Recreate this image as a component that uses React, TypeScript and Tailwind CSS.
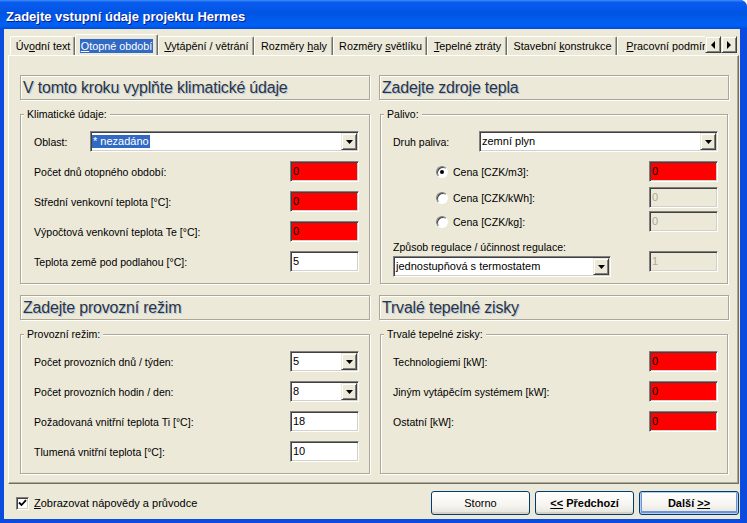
import React from "react";

const sunken =
  "border border-t-[#808080] border-l-[#808080] border-r-white border-b-white shadow-[inset_1px_1px_0_#404040,inset_-1px_-1px_0_#d4d0c8]";
const raised =
  "border border-t-[#ece9d8] border-l-[#ece9d8] border-r-[#404040] border-b-[#404040] shadow-[inset_1px_1px_0_#fff,inset_-1px_-1px_0_#808080]";
const etched = "border border-[#aca899] shadow-[inset_1px_1px_0_#fff,1px_1px_0_#fff]";
const label = "text-[10.55px] leading-[14px] whitespace-nowrap";

const tabs = [
  { t: "Úvodní text", u: 2, w: "w-[65px]" },
  { t: "Otopné období", u: 0, w: "w-[83px]", sel: true },
  { t: "Vytápění / větrání", u: 0, w: "w-[96px]" },
  { t: "Rozměry haly", u: 8, w: "w-[79px]" },
  { t: "Rozměry světlíku", u: 8, w: "w-[94px]" },
  { t: "Tepelné ztráty", u: 0, w: "w-[80px]" },
  { t: "Stavební konstrukce", u: 9, w: "w-[110px]" },
  { t: "Pracovní podmínky", u: 0, w: "w-[110px]" },
];

const U = ({ t, i }: { t: string; i: number }) => (
  <>
    {t.slice(0, i)}
    <span className="underline">{t[i]}</span>
    {t.slice(i + 1)}
  </>
);

const Field = ({ value, tone = "white" }: { value: string; tone?: "red" | "white" | "off" }) => {
  const bg =
    tone === "red"
      ? "bg-[#ff0000] text-black"
      : tone === "off"
      ? "bg-[#ece9d8] text-[#aca899]"
      : "bg-white text-black";
  return (
    <div className={`w-[69px] h-[21px] shrink-0 flex items-center pl-[2px] text-[11px] ${sunken} ${bg}`}>
      {value}
    </div>
  );
};

const DropBtn = () => (
  <div className={`w-[16px] h-[17px] shrink-0 bg-[#ece9d8] flex items-center justify-center ${raised}`}>
    <svg width="7" height="4" viewBox="0 0 7 4">
      <path d="M0 0h7L3.5 4z" fill="#000" />
    </svg>
  </div>
);

const Combo = ({ value, w, selected }: { value: string; w: string; selected?: boolean }) => (
  <div className={`${w} h-[21px] shrink-0 flex items-center bg-white pl-[1px] pr-[1px] text-[11px] ${sunken}`}>
    <span className={`flex-1 whitespace-nowrap ${selected ? "" : "pl-[1px]"}`}>
      {selected ? (
        <span className="bg-[#316ac5] text-white px-[1px] leading-[13px] inline-block">{value}</span>
      ) : (
        value
      )}
    </span>
    <DropBtn />
  </div>
);

const Row = ({ text, children }: { text: string; children: React.ReactNode }) => (
  <div className="h-[21px] flex items-center justify-between">
    <span className={label}>{text}</span>
    {children}
  </div>
);

const Radio = ({ checked }: { checked?: boolean }) => (
  <div className="w-[12px] h-[12px] rounded-full border border-t-[#808080] border-l-[#808080] border-r-white border-b-white bg-white shadow-[inset_1px_1px_0_#404040] flex items-center justify-center">
    {checked && <div className="w-[4px] h-[4px] rounded-full bg-black" />}
  </div>
);

const RadioRow = ({ text, checked, tone, mt }: { text: string; checked?: boolean; tone: "red" | "off"; mt: string }) => (
  <div className={`${mt} h-[21px] flex items-center`}>
    <div className="ml-[43px]">
      <Radio checked={checked} />
    </div>
    <span className={`${label} ml-[5px]`}>{text}</span>
    <div className="ml-auto">
      <Field value="0" tone={tone} />
    </div>
  </div>
);

const Header = ({ text }: { text: string }) => (
  <div className={`h-[25px] flex items-center pl-[2px] ${etched}`}>
    <span className="text-[16px] leading-[20px] tracking-[-0.2px] text-[#333] [text-shadow:1px_1px_0_#a9c8f2] whitespace-nowrap">
      {text}
    </span>
  </div>
);

const Group = ({ title, h, children }: { title: string; h: string; children: React.ReactNode }) => (
  <div className={`${h} ${etched}`}>
    <div className={`-mt-[8px] ml-[3px] px-[3px] w-fit bg-[#ece9d8] ${label}`}>{title}</div>
    {children}
  </div>
);

const XpButton = ({ children, def }: { children: React.ReactNode; def?: boolean }) => (
  <button
    className={`h-[24px] rounded-[3px] border border-[#003c74] bg-[linear-gradient(to_bottom,#ffffff_0%,#f5f4ef_60%,#e4e3db_100%)] text-[11px] text-black ${
      def ? "w-[100px] shadow-[inset_0_0_0_1px_#b2cdf3,inset_0_-1px_0_2px_#6f93d8]" : "w-[99px] shadow-[inset_0_-2px_0_#d6d0c5]"
    }`}
  >
    {children}
  </button>
);

export default function App() {
  return (
    <div className="w-[747px] h-[523px] bg-white font-['Liberation_Sans',Arial,sans-serif] text-black">
      <div className="h-full flex flex-col rounded-tr-[7px] bg-[#0b4cdf]">
        {/* title bar */}
        <div className="h-[29px] shrink-0 flex items-center pl-[6px] pt-[3px] rounded-tr-[7px] bg-[linear-gradient(to_bottom,#3d8ef8_0%,#0a5cef_8%,#0054e3_45%,#0060f4_85%,#0059ea_94%,#0046d4_100%)]">
          <span className="text-[13px] leading-[15px] font-bold text-white [text-shadow:1px_1px_0_#0a1a8c]">
            Zadejte vstupní údaje projektu Hermes
          </span>
        </div>

        {/* body */}
        <div className="h-[490px] ml-[4px] mr-[7px] bg-[#ece9d8] flex flex-col pt-[5px]">
          {/* tabs */}
          <div className="h-[21px] flex items-end pl-[6px] pr-[3px]">
            <div className="w-[695px] h-full flex items-end overflow-hidden">
              {tabs.map((tab) => (
                <div
                  key={tab.t}
                  className={`${tab.w} shrink-0 flex items-center justify-center bg-[#ece9d8] border-t border-l border-white border-r border-r-[#716f64] shadow-[inset_-1px_0_0_#aca899] rounded-t-[2px] text-[10.8px] whitespace-nowrap ${
                    tab.sel ? "h-[22px] -mb-[1px] relative z-10" : "h-[19px]"
                  }`}
                >
                  {tab.sel ? (
                    <span className="bg-[#316ac5] text-white px-[1px] leading-[14px]">
                      <U t={tab.t} i={tab.u} />
                    </span>
                  ) : (
                    <span className="pl-[1px]">
                      <U t={tab.t} i={tab.u} />
                    </span>
                  )}
                </div>
              ))}
            </div>
            <div className="flex mb-[2px]">
              {["M4 0v8L0 4z", "M0 0v8l4-4z"].map((d) => (
                <div key={d} className={`w-[16px] h-[17px] bg-[#ece9d8] flex items-center justify-center ${raised}`}>
                  <svg width="4" height="8" viewBox="0 0 4 8">
                    <path d={d} fill="#000" />
                  </svg>
                </div>
              ))}
            </div>
          </div>

          {/* panel */}
          <div className="h-[429px] ml-[4px] mr-[1px] border border-t-white border-l-white border-r-[#716f64] border-b-[#716f64] shadow-[inset_-1px_-1px_0_#aca899] pl-[11px] pt-[19px]">
            <div className="grid grid-cols-[350px_350px] gap-x-[9px]">
              {/* left column */}
              <div className="flex flex-col">
                <Header text="V tomto kroku vyplňte klimatické údaje" />
                <div className="mt-[14px]">
                  <Group title="Klimatické údaje:" h="h-[170px]">
                    <div className="mt-[10px] pl-[13px] pr-[10px] flex flex-col gap-[9px]">
                      <Row text="Oblast:">
                        <Combo value="* nezadáno" w="w-[269px]" selected />
                      </Row>
                      <Row text="Počet dnů otopného období:">
                        <Field value="0" tone="red" />
                      </Row>
                      <Row text="Střední venkovní teplota [°C]:">
                        <Field value="0" tone="red" />
                      </Row>
                      <Row text="Výpočtová venkovní teplota Te [°C]:">
                        <Field value="0" tone="red" />
                      </Row>
                      <Row text="Teplota země pod podlahou [°C]:">
                        <Field value="5" />
                      </Row>
                    </div>
                  </Group>
                </div>
                <div className="mt-[11px]">
                  <Header text="Zadejte provozní režim" />
                </div>
                <div className="mt-[14px]">
                  <Group title="Provozní režim:" h="h-[140px]">
                    <div className="mt-[10px] pl-[13px] pr-[10px] flex flex-col gap-[9px]">
                      <Row text="Počet provozních dnů / týden:">
                        <Combo value="5" w="w-[69px]" />
                      </Row>
                      <Row text="Počet provozních hodin / den:">
                        <Combo value="8" w="w-[69px]" />
                      </Row>
                      <Row text="Požadovaná vnitřní teplota Ti [°C]:">
                        <Field value="18" />
                      </Row>
                      <Row text="Tlumená vnitřní teplota [°C]:">
                        <Field value="10" />
                      </Row>
                    </div>
                  </Group>
                </div>
              </div>

              {/* right column */}
              <div className="flex flex-col">
                <Header text="Zadejte zdroje tepla" />
                <div className="mt-[14px] mx-[1px]">
                  <Group title="Palivo:" h="h-[170px]">
                    <div className="mt-[10px] pl-[12px] pr-[9px] flex flex-col">
                      <Row text="Druh paliva:">
                        <Combo value="zemní plyn" w="w-[239px]" />
                      </Row>
                      <RadioRow mt="mt-[9px]" text="Cena [CZK/m3]:" checked tone="red" />
                      <RadioRow mt="mt-[5px]" text="Cena [CZK/kWh]:" tone="off" />
                      <RadioRow mt="mt-[3px]" text="Cena [CZK/kg]:" tone="off" />
                      <div className="mt-[8px] flex items-start">
                        <div className="flex flex-col">
                          <span className={label}>Způsob regulace / účinnost regulace:</span>
                          <div className="mt-[2px]">
                            <Combo value="jednostupňová s termostatem" w="w-[218px]" />
                          </div>
                        </div>
                        <div className="ml-auto mt-[11px]">
                          <Field value="1" tone="off" />
                        </div>
                      </div>
                    </div>
                  </Group>
                </div>
                <div className="mt-[11px]">
                  <Header text="Trvalé tepelné zisky" />
                </div>
                <div className="mt-[14px] mx-[1px]">
                  <Group title="Trvalé tepelné zisky:" h="h-[140px]">
                    <div className="mt-[10px] pl-[12px] pr-[9px] flex flex-col gap-[9px]">
                      <Row text="Technologiemi [kW]:">
                        <Field value="0" tone="red" />
                      </Row>
                      <Row text="Jiným vytápěcím systémem [kW]:">
                        <Field value="0" tone="red" />
                      </Row>
                      <Row text="Ostatní [kW]:">
                        <Field value="0" tone="red" />
                      </Row>
                    </div>
                  </Group>
                </div>
              </div>
            </div>
          </div>

          {/* bottom bar */}
          <div className="mt-[7px] h-[24px] flex items-center pl-[12px] pr-[1px]">
            <div className="w-[13px] h-[13px] bg-white border border-t-[#808080] border-l-[#808080] border-r-white border-b-white shadow-[inset_1px_1px_0_#404040,inset_-1px_-1px_0_#d4d0c8] flex items-center justify-center">
              <svg width="9" height="8" viewBox="0 0 9 8">
                <path d="M1 3.5l2.5 2.5L8 1.2" stroke="#000" strokeWidth="1.8" fill="none" />
              </svg>
            </div>
            <span className="ml-[5px] text-[11px] leading-[14px]">
              <U t="Zobrazovat nápovědy a průvodce" i={0} />
            </span>
            <div className="ml-auto flex gap-[5px]">
              <XpButton>Storno</XpButton>
              <XpButton>
                <span className="font-bold">
                  <span className="underline">&lt;&lt;</span> Předchozí
                </span>
              </XpButton>
              <XpButton def>
                <span className="font-bold">
                  Další <span className="underline">&gt;&gt;</span>
                </span>
              </XpButton>
            </div>
          </div>
        </div>
      </div>
    </div>
  );
}
